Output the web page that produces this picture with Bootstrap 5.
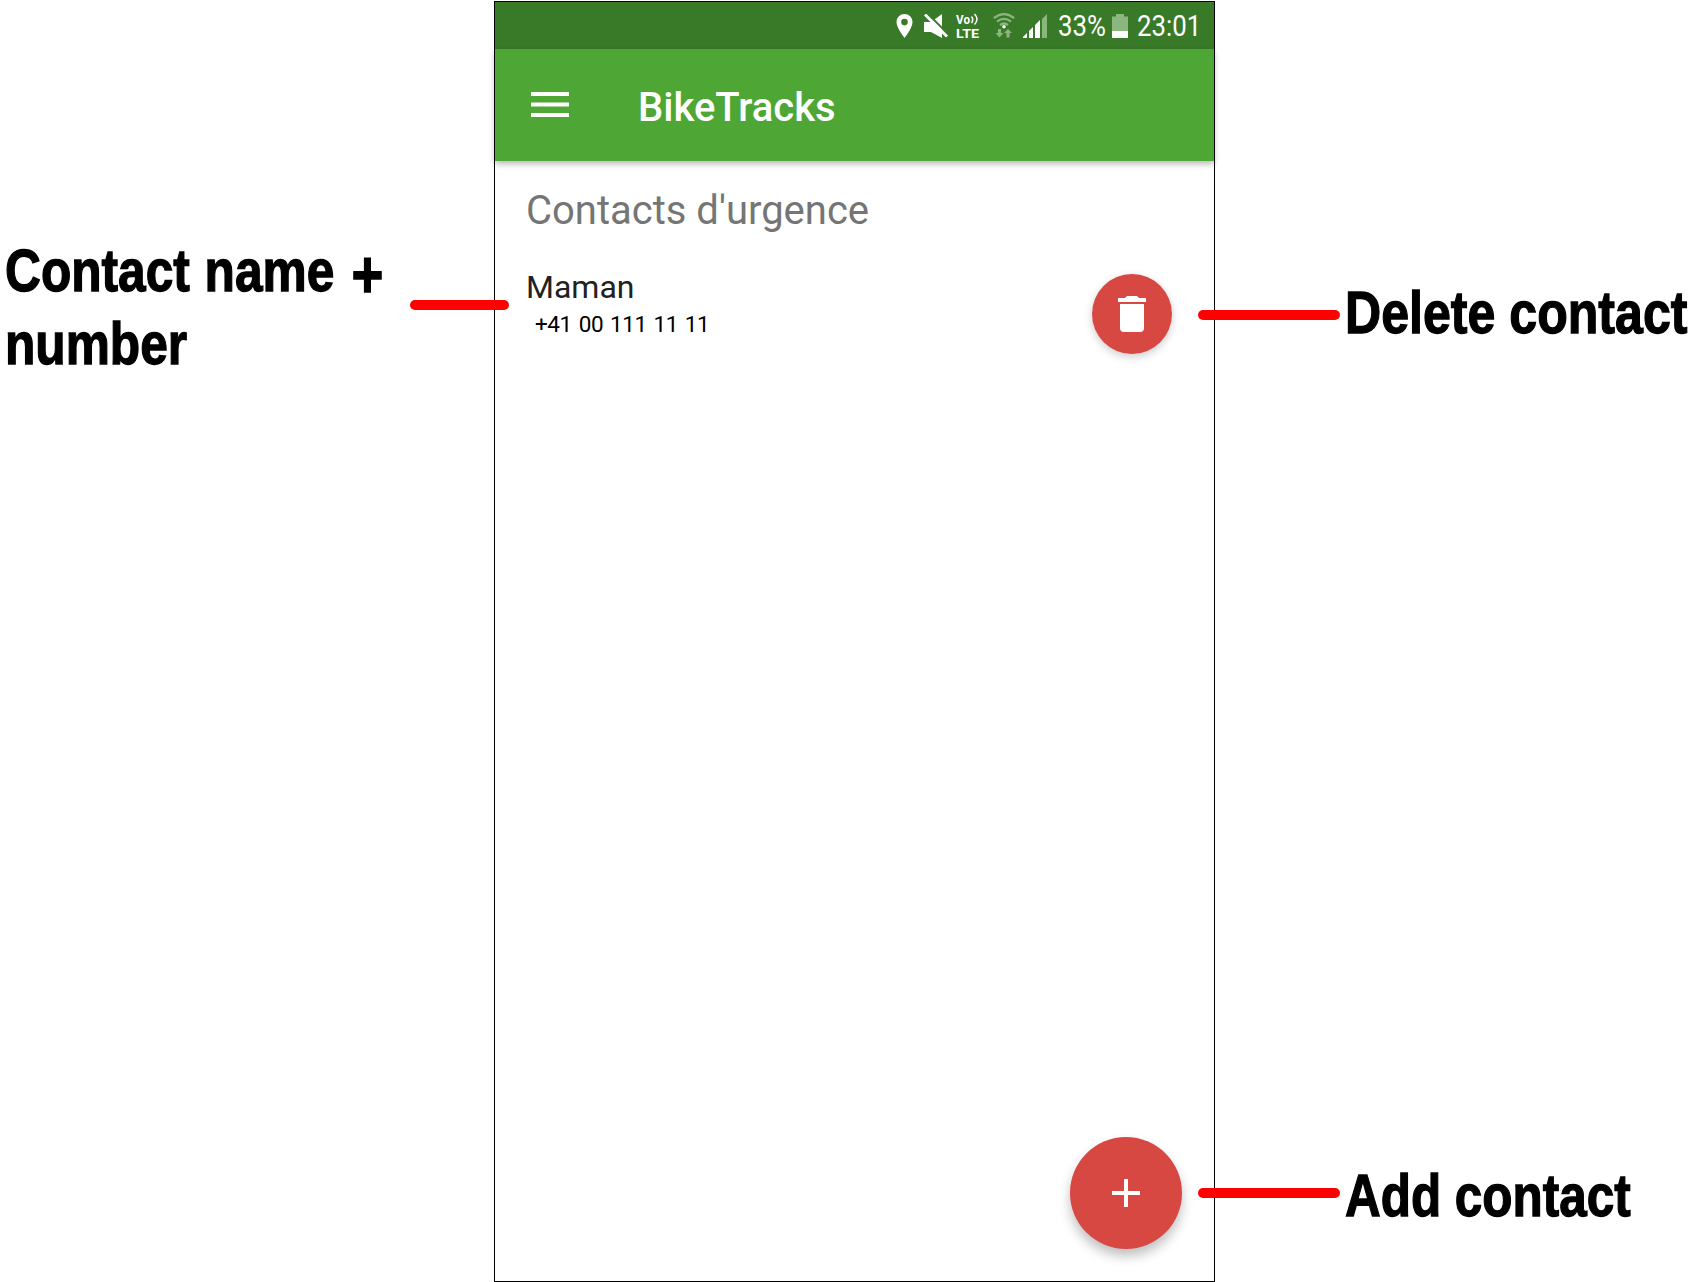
<!DOCTYPE html>
<html lang="fr">
<head>
<meta charset="utf-8">
<meta name="viewport" content="width=device-width, initial-scale=1">
<title>BikeTracks</title>
<link rel="stylesheet" href="https://cdn.jsdelivr.net/npm/bootstrap@5.3.0/dist/css/bootstrap.min.css">
<style>
body{background:#fff;color:#000;font-family:Roboto,"Liberation Sans",sans-serif;height:1282px;overflow:hidden}
svg{display:block;flex:none}
.side-left{width:494px;padding:234px 0 0 5px}
.side-right{width:479px;padding-top:276px}
.phone{width:721px;height:1281px;margin-top:1px;border:1px solid #000}
.callout-text{font:bold 60px/73px "Liberation Sans",Arial,sans-serif;white-space:nowrap;transform:scaleX(.828);transform-origin:0 0;-webkit-text-stroke:1.3px #000;margin-left:5px}
.callout-wide{width:400px;margin-left:0;word-spacing:1px}
.plus-sign{font-size:66px;line-height:1px;margin-left:3px;vertical-align:-6px}
.callout-line{height:10px;border-radius:5px;background:red;z-index:3;position:relative;flex:none}
.line-left{width:99px;margin-top:66px;margin-right:-15px}
.line-right{width:142px;margin-left:-17px}
.delete-note .line-right{margin-top:34px}
.delete-note .callout-text{transform:scaleX(.835)}
.add-note{margin-top:810px}
.add-note .line-right{margin-top:29px}
.add-note .callout-text{transform:scaleX(.824)}
.status-bar{height:47px;background:#387a27;padding-left:401px}
.icon-mute{margin-left:11px}
.icon-volte{margin:0 0 0 8px;overflow:visible}
.icon-wifi{margin-left:14px}
.icon-signal{margin-left:8px}
.icon-battery{margin-left:6px}
.status-text{font-size:30px;line-height:47px;white-space:nowrap;transform:scaleX(.86);transform-origin:0 50%;padding-bottom:1px}
.status-percent{width:48px;margin-left:10px}
.status-time{margin-left:9px}
.app-bar{height:112px;background:#4ea734;padding:0 0 0 36px;box-shadow:0 3px 6px rgba(0,0,0,.28);position:relative}
.app-title{font-size:40px;font-weight:500;line-height:47px;margin-left:69px;margin-top:4px}
.phone-body{padding:26px 0 0 31px}
.section-title{font-size:40px;line-height:48px;color:#757575;margin:0}
.contact-row{margin-top:39px;padding-right:42px}
.contact-info{margin-top:-6px}
.contact-name{font-size:32px;line-height:38px;color:#212121}
.contact-number{font-size:22.5px;line-height:28px;padding:4px 0 0 9px;letter-spacing:-.4px;word-spacing:1.6px}
.round-btn{background:#d84843;border:0;padding:0;flex:none}
.btn-delete{width:80px;height:80px;box-shadow:0 3px 8px rgba(0,0,0,.2)}
.btn-add{width:112px;height:112px;box-shadow:0 7px 12px rgba(0,0,0,.25);margin:0 32px 32px 0}
</style>
<script src="https://cdn.jsdelivr.net/npm/bootstrap@5.3.0/dist/js/bootstrap.bundle.min.js"></script>
</head>
<body class="d-flex align-items-start">
<aside class="side-left d-flex justify-content-between flex-shrink-0">
  <div class="callout-text callout-wide">Contact name <span class="plus-sign">+</span><br>number</div>
  <div class="callout-line line-left"></div>
</aside>
<main class="phone d-flex flex-column flex-shrink-0 bg-white">
  <div class="status-bar d-flex align-items-center text-white flex-shrink-0">
    <svg width="17" height="24" viewBox="0 0 16 24"><path fill="#fff" fill-rule="evenodd" d="M8 0a8 8 0 0 0-8 8c0 6 8 16 8 16s8-10 8-16a8 8 0 0 0-8-8zm0 4.800a3.300 3.300 0 1 1 0 6.600 3.300 3.300 0 0 1 0-6.600z"/></svg>
    <svg class="icon-mute" width="24" height="24" viewBox="0 0 24 24"><path fill="#fff" d="M0 8h7L18 0v24L7 18H0z"/><path stroke="#387a27" stroke-width="2" d="M3-1l22 22"/><path stroke="#fff" stroke-width="2.800" d="M1 .5l22 22"/></svg>
    <svg class="icon-volte" width="23" height="28" viewBox="0 0 23 28" fill="#fff" font-family="Roboto, sans-serif" font-weight="700"><text x="0" y="11.500" font-size="12" textLength="14" lengthAdjust="spacingAndGlyphs">Vo</text><path fill="none" stroke="#fff" stroke-width="1.500" d="M15.500 4.500q2.500 3 0 6.500M18.500 2q5 5 0 10.500"/><text x="0" y="25.500" font-size="13" textLength="23" lengthAdjust="spacingAndGlyphs">LTE</text></svg>
    <svg class="icon-wifi" width="22" height="25" viewBox="0 0 22 25" fill="none" stroke="#8db580" stroke-width="2.200"><path d="M.8 5.200q10.200-8 20.400 0M4 8.700q7-5.500 14 0M7 12q4-3 8 0"/><circle cx="11" cy="13.800" r="1.800" fill="#fff" stroke="none"/><path fill="#8db580" stroke="none" d="M5 16h3v4h2.500l-4 4.500-4-4.500H5zM13.500 24.500h3v-4.500H19l-4-4-4 4h2.500z"/></svg>
    <svg class="icon-signal" width="25" height="24" viewBox="0 0 25 24" fill="#fff"><path d="M0 24v-1l4-4v5zM6 24v-7l4-4v11zM12 24V11l5-5v18z"/><path fill="#8db580" d="M19 24V5l5-5v24z"/></svg>
    <div class="status-text status-percent">33%</div>
    <svg class="icon-battery" width="16" height="24" viewBox="0 0 16 24"><path fill="#8db580" d="M0 2.500h4V0h8v2.500h4V17H0z"/><path fill="#fff" d="M0 17h16v7H0z"/></svg>
    <div class="status-text status-time">23:01</div>
  </div>
  <nav class="app-bar d-flex align-items-center text-white flex-shrink-0">
    <svg width="38" height="26" viewBox="0 0 38 26" fill="#fff"><path d="M0 0h38v4H0zM0 10.500h38v4H0zM0 21h38v4H0z"/></svg>
    <div class="app-title">BikeTracks</div>
  </nav>
  <section class="phone-body flex-grow-1 d-flex flex-column">
    <h1 class="section-title fw-normal">Contacts d'urgence</h1>
    <div class="contact-row d-flex justify-content-between">
      <div class="contact-info">
        <div class="contact-name">Maman</div>
        <div class="contact-number">+41 00 111 11 11</div>
      </div>
      <button class="btn round-btn btn-delete rounded-circle d-flex align-items-center justify-content-center" aria-label="Supprimer">
        <svg width="28" height="36" viewBox="0 0 28 36" fill="#fff"><path d="M0 2h7l2-2h10l2 2h7v4H0zM2 8h24v24q0 4-4 4H6q-4 0-4-4z"/></svg>
      </button>
    </div>
    <button class="btn round-btn btn-add rounded-circle d-flex align-items-center justify-content-center mt-auto ms-auto" aria-label="Ajouter">
      <svg width="28" height="28" viewBox="0 0 28 28" fill="#fff"><path d="M12 0h4v12h12v4H16v12h-4V16H0v-4h12z"/></svg>
    </button>
  </section>
</main>
<aside class="side-right flex-shrink-0">
  <div class="delete-note d-flex align-items-start"><div class="callout-line line-right"></div><div class="callout-text">Delete contact</div></div>
  <div class="add-note d-flex align-items-start"><div class="callout-line line-right"></div><div class="callout-text">Add contact</div></div>
</aside>
</body>
</html>
